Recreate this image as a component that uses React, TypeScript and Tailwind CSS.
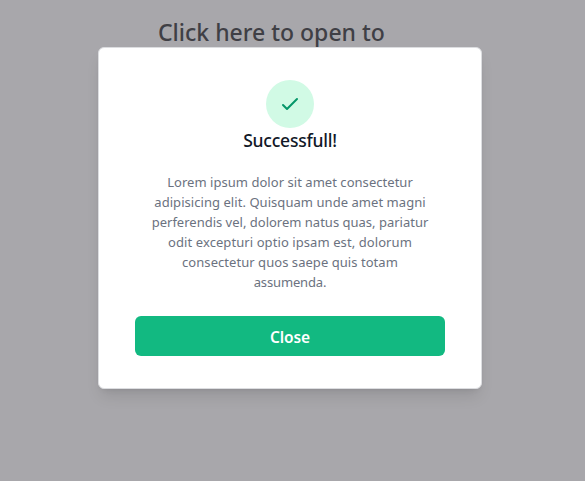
const lines = [
  { text: "Lorem ipsum dolor sit amet consectetur", spacing: "tracking-[0.04px]" },
  { text: "adipisicing elit. Quisquam unde amet magni", spacing: "tracking-[0.05px]" },
  { text: "perferendis vel, dolorem natus quas, pariatur", spacing: "tracking-[0px]" },
  { text: "odit excepturi optio ipsam est, dolorum", spacing: "tracking-[0.08px]" },
  { text: "consectetur quos saepe quis totam", spacing: "tracking-[0.05px]" },
  { text: "assumenda.", spacing: "tracking-[-0.15px]" },
];

function CheckIcon() {
  return (
    <svg className="h-6 w-6 text-[#059669]" fill="none" viewBox="0 0 24 24" stroke="currentColor">
      <path strokeLinecap="round" strokeLinejoin="round" strokeWidth={2} d="M5 13l4 4L19 7" />
    </svg>
  );
}

export default function App() {
  return (
    <main className="relative h-[481px] w-[585px] overflow-hidden bg-[#a8a7ab] font-['Noto_Sans','Open_Sans',sans-serif]">
      <h1 className="ml-[158px] pt-4 text-[23px] leading-8 font-medium whitespace-nowrap text-[#3f3f45]">
        <span>Click here to open to</span>
      </h1>
      <div className="absolute inset-0 flex items-start pt-[47px] pl-[98px]">
        <section
          role="dialog"
          className="flex h-[342px] w-96 flex-col items-center rounded-md border border-[#dcdde0] bg-white px-9 py-8 shadow-lg"
        >
          <div className="flex h-12 w-12 shrink-0 items-center justify-center rounded-full bg-[#d1fae5]">
            <CheckIcon />
          </div>
          <h3 className="text-[17.5px] leading-6 font-medium whitespace-nowrap text-[#111827]">
            <span className="tracking-[-0.22px]">Successfull!</span>
          </h3>
          <p className="mt-5 text-center text-[13px] leading-5 text-[#6b7280]">
            {lines.map((line) => (
              <span key={line.text} className="block whitespace-nowrap">
                <span className={line.spacing}>{line.text}</span>
              </span>
            ))}
          </p>
          <button className="mt-6 h-10 w-full shrink-0 rounded-md bg-[#12b981] pt-px text-[15.5px] leading-6 font-semibold text-white">
            <span className="tracking-[-0.1px]">Close</span>
          </button>
        </section>
      </div>
    </main>
  );
}
